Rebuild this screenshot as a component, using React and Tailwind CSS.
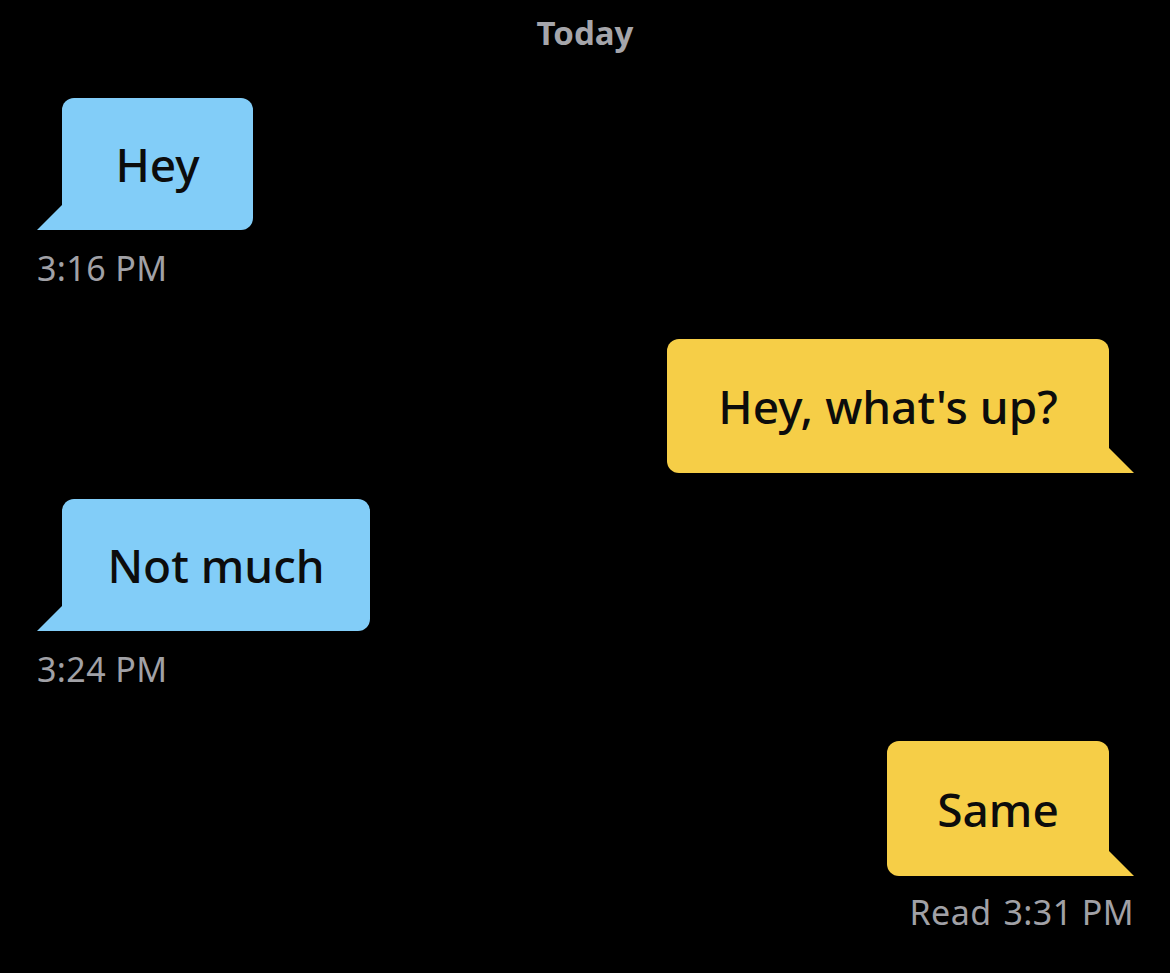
import React from "react";

function Incoming({ text, time, widthClass, className = "" }) {
  return (
    <div className={"flex flex-col items-start " + className}>
      <div className="flex items-end">
        <div className="w-[25px] h-[25px] bg-[#82cdf8] [clip-path:polygon(100%_0,100%_100%,0_100%)]" />
        <div className={widthClass + " h-[132px] flex items-center justify-center bg-[#82cdf8] rounded-[12px] rounded-bl-none text-[46px] leading-none text-[#0c0c0c] font-medium"}>
          {text}
        </div>
      </div>
      <div className="mt-[18px] h-[40px] flex items-center text-[34px] leading-none text-[#a1a1a6] tracking-[0.4px]">
        {time}
      </div>
    </div>
  );
}

function Outgoing({ text, widthClass, className = "", heightClass = "h-[134px]" }) {
  return (
    <div className={"flex items-end justify-end " + className}>
      <div className={widthClass + " " + heightClass + " flex items-center justify-center bg-[#f6ce47] rounded-[12px] rounded-br-none text-[46px] leading-none text-[#0c0c0c] font-medium"}>
        {text}
      </div>
      <div className="w-[25px] h-[25px] bg-[#f6ce47] [clip-path:polygon(0_0,100%_100%,0_100%)]" />
    </div>
  );
}

export default function App() {
  return (
    <div className="min-h-screen bg-black px-[36px] font-['Noto_Sans','Open_Sans',sans-serif]">
      <div className="h-[64px] flex items-center justify-center text-[33px] font-bold text-[#a5a5aa] leading-none">
        Today
      </div>
      <Incoming text="Hey" time="3:16 PM" widthClass="w-[191px]" className="mt-[34px] pl-px" />
      <Outgoing text="Hey, what's up?" widthClass="w-[442px]" className="mt-[51px]" />
      <Incoming text="Not much" time="3:24 PM" widthClass="w-[308px]" className="mt-[26px] pl-px" />
      <Outgoing text="Same" widthClass="w-[222px]" className="mt-[52px]" heightClass="h-[135px]" />
      <div className="mt-[16px] h-[40px] flex items-center justify-end gap-[12px] text-[34px] leading-none text-[#a1a1a6] tracking-[0.4px]">
        <span>Read</span>
        <span>3:31 PM</span>
      </div>
    </div>
  );
}
